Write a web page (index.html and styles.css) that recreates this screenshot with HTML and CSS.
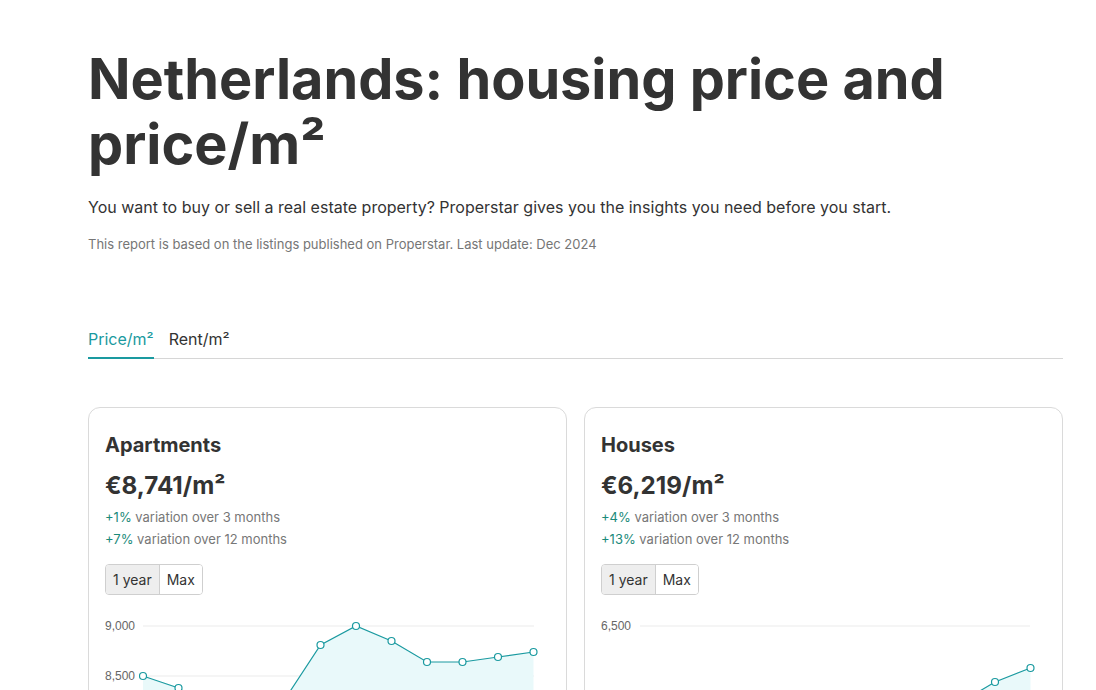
FILE: index.html
```html
<!DOCTYPE html>
<html lang="en">
<head>
  <meta charset="UTF-8" />
  <meta name="viewport" content="width=device-width, initial-scale=1.0" />
  <title>Netherlands: housing price and price/m²</title>
  <link rel="stylesheet" href="styles.css">
</head>
<body>
  <div class="page">
    <h1 class="page-title">Netherlands: housing price and price/m²</h1>
    <p class="intro">You want to buy or sell a real estate property? Properstar gives you the insights you need before you start.</p>
    <p class="note">This report is based on the listings published on Properstar. Last update: Dec 2024</p>

    <!-- Price / rent switch -->
    <div class="tabs">
      <a class="tab active" href="#">Price/m²</a>
      <a class="tab" href="#">Rent/m²</a>
    </div>

    <div class="cards">
      <div class="card">
        <h3 class="card-title">Apartments</h3>
        <div class="price">€8,741/m²</div>
        <div class="variation"><span class="up">+1%</span> variation over 3 months</div>
        <div class="variation"><span class="up">+7%</span> variation over 12 months</div>
        <div class="range">
          <button class="range-btn selected">1 year</button>
          <button class="range-btn">Max</button>
        </div>
        <svg class="chart" width="445" height="240" viewBox="0 0 445 240">
          <g class="grid">
            <line x1="38" y1="15" x2="429" y2="15" />
            <line x1="38" y1="65" x2="429" y2="65" />
            <line x1="38" y1="115" x2="429" y2="115" />
            <line x1="38" y1="165" x2="429" y2="165" />
          </g>
          <g class="axis">
            <text x="0" y="19">9,000</text>
            <text x="0" y="69">8,500</text>
            <text x="0" y="119">8,000</text>
            <text x="0" y="169">7,500</text>
          </g>
          <path class="area" d="M38,65 L73.5,77 L109,100 L144.5,105 L180,88 L215.5,34 L251,15 L286.5,30 L322,51 L357.5,51 L393,46 L428.5,41 L428.5,240 L38,240 Z" />
          <path class="line" d="M38,65 L73.5,77 L109,100 L144.5,105 L180,88 L215.5,34 L251,15 L286.5,30 L322,51 L357.5,51 L393,46 L428.5,41" />
          <g class="dots">
            <circle cx="38" cy="65" r="3.5" />
            <circle cx="73.5" cy="77" r="3.5" />
            <circle cx="109" cy="100" r="3.5" />
            <circle cx="144.5" cy="105" r="3.5" />
            <circle cx="180" cy="88" r="3.5" />
            <circle cx="215.5" cy="34" r="3.5" />
            <circle cx="251" cy="15" r="3.5" />
            <circle cx="286.5" cy="30" r="3.5" />
            <circle cx="322" cy="51" r="3.5" />
            <circle cx="357.5" cy="51" r="3.5" />
            <circle cx="393" cy="46" r="3.5" />
            <circle cx="428.5" cy="41" r="3.5" />
          </g>
        </svg>
      </div>

      <div class="card">
        <h3 class="card-title">Houses</h3>
        <div class="price">€6,219/m²</div>
        <div class="variation"><span class="up">+4%</span> variation over 3 months</div>
        <div class="variation"><span class="up">+13%</span> variation over 12 months</div>
        <div class="range">
          <button class="range-btn selected">1 year</button>
          <button class="range-btn">Max</button>
        </div>
        <svg class="chart" width="445" height="240" viewBox="0 0 445 240">
          <g class="grid">
            <line x1="39" y1="15" x2="429" y2="15" />
            <line x1="39" y1="115" x2="429" y2="115" />
            <line x1="39" y1="215" x2="429" y2="215" />
          </g>
          <g class="axis">
            <text x="0" y="19">6,500</text>
            <text x="0" y="119">6,000</text>
            <text x="0" y="219">5,500</text>
          </g>
          <path class="area" d="M39,190 L74.5,186 L110,178 L145.5,170 L181,168 L216.5,160 L252,150 L287.5,138 L323,120 L358.5,92 L394,71 L429.5,57 L429.5,240 L39,240 Z" />
          <path class="line" d="M39,190 L74.5,186 L110,178 L145.5,170 L181,168 L216.5,160 L252,150 L287.5,138 L323,120 L358.5,92 L394,71 L429.5,57" />
          <g class="dots">
            <circle cx="39" cy="190" r="3.5" />
            <circle cx="74.5" cy="186" r="3.5" />
            <circle cx="110" cy="178" r="3.5" />
            <circle cx="145.5" cy="170" r="3.5" />
            <circle cx="181" cy="168" r="3.5" />
            <circle cx="216.5" cy="160" r="3.5" />
            <circle cx="252" cy="150" r="3.5" />
            <circle cx="287.5" cy="138" r="3.5" />
            <circle cx="323" cy="120" r="3.5" />
            <circle cx="358.5" cy="92" r="3.5" />
            <circle cx="394" cy="71" r="3.5" />
            <circle cx="429.5" cy="57" r="3.5" />
          </g>
        </svg>
      </div>
    </div>
  </div>
</body>
</html>
```

FILE: styles.css
```css
/* Base styles */
body {
  font-family: Inter, "Noto Sans", sans-serif;
  color: #333;
  background: #fff;
  margin: 0;
  padding: 0;
}
.page {
  width: 975px;
  margin: 0 0 0 88px;
  padding-top: 46px;
}
.page-title {
  font-size: 55.8px;
  line-height: 65px;
  font-weight: 700;
  margin: 0 0 19px 0;
  color: #333;
}
.intro {
  font-size: 16px;
  line-height: 24px;
  margin: 0 0 15px 0;
}
.note {
  font-size: 13px;
  line-height: 20px;
  color: #767676;
  margin: 0;
}
/* Tabs */
.tabs {
  display: flex;
  gap: 15px;
  margin-top: 74px;
  border-bottom: 1px solid #d6d6d6;
}
.tab {
  font-size: 16px;
  line-height: 22px;
  padding: 0 0 7px 0;
  color: #333;
  text-decoration: none;
  border-bottom: 2px solid transparent;
  margin-bottom: -1px;
}
.tab.active {
  color: #1a9aa0;
  border-bottom-color: #1a9aa0;
}
/* Cards */
.cards {
  display: grid;
  grid-template-columns: 1fr 1fr;
  gap: 17px;
  margin-top: 48px;
}
.card {
  border: 1px solid #dadada;
  border-radius: 12px;
  padding: 23px 16px 0 16px;
  height: 320px;
  overflow: hidden;
}
.card-title {
  font-size: 20px;
  line-height: 28px;
  font-weight: 700;
  margin: 0 0 11px 0;
}
.price {
  font-size: 24.2px;
  line-height: 32px;
  font-weight: 700;
  margin-bottom: 4px;
}
.variation {
  font-size: 13px;
  line-height: 22px;
  color: #777;
}
.variation .up {
  color: #1a8a7a;
}
.range {
  display: inline-flex;
  margin-top: 14px;
  border: 1px solid #cfcfcf;
  border-radius: 4px;
  overflow: hidden;
}
.range-btn {
  font-family: inherit;
  font-size: 14px;
  color: #333;
  background: #fff;
  border: none;
  padding: 0 7px;
  height: 29px;
}
.range-btn + .range-btn {
  border-left: 1px solid #cfcfcf;
}
.range-btn.selected {
  background: #eee;
}
.chart {
  display: block;
  margin-top: 16px;
}
.grid line {
  stroke: #ebebeb;
  stroke-width: 1;
}
.axis text {
  font-family: "Liberation Sans", Arial, sans-serif;
  font-size: 12px;
  fill: #666;
}
.area {
  fill: #e9f9fa;
}
.line {
  fill: none;
  stroke: #1a9aa0;
  stroke-width: 1.2;
}
.dots circle {
  fill: #fff;
  stroke: #1a9aa0;
  stroke-width: 1.2;
}
```
